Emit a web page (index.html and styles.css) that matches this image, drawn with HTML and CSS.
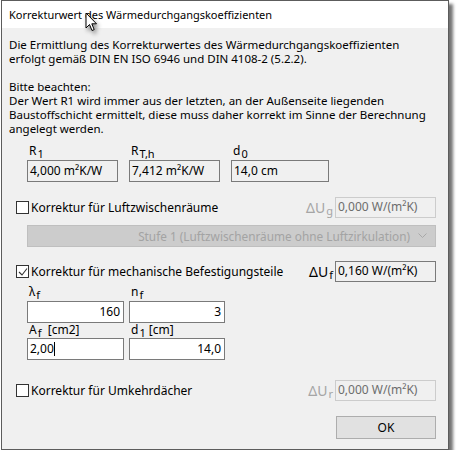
FILE: index.html
```html
<!DOCTYPE html>
<html lang="de">
<head>
<meta charset="utf-8">
<title>Korrekturwert</title>
<link rel="stylesheet" href="styles.css">
</head>
<body>
<div class="dialog">
  <div class="titlebar"><span>Korrekturwert des Wärmedurchgangskoeffizienten</span></div>
  <div class="client">
    <p class="info">Die Ermittlung des Korrekturwertes des Wärmedurchgangskoeffizienten<br>erfolgt gemäß DIN EN ISO 6946 und DIN 4108-2 (5.2.2).</p>
    <p class="info info-gap">Bitte beachten:<br>Der Wert R1 wird immer aus der letzten, an der Außenseite liegenden<br>Baustoffschicht ermittelt, diese muss daher korrekt im Sinne der Berechnung<br>angelegt werden.</p>

    <div class="fields fields-top">
      <div class="field w90">
        <div class="flabel">R<sub>1</sub></div>
        <div class="box readonly">4,000 m²K/W</div>
      </div>
      <div class="field w90 gap12">
        <div class="flabel">R<sub>T,h</sub></div>
        <div class="box readonly">7,412 m²K/W</div>
      </div>
      <div class="field w98 gap10">
        <div class="flabel">d<sub>0</sub></div>
        <div class="box readonly">14,0 cm</div>
      </div>
    </div>

    <div class="check-row row-air">
      <span class="cb"></span>
      <span class="cb-label">Korrektur für Luftzwischenräume</span>
      <span class="du disabled">ΔU<sub>g</sub></span>
      <div class="box ubox disabled-box">0,000 W/(m²K)</div>
    </div>

    <div class="combo">
      <span class="combo-text">Stufe 1 (Luftzwischenräume ohne Luftzirkulation)</span>
      <svg class="chev" width="9" height="6" viewBox="0 0 9 6"><path d="M0.5 0.5 L4.5 4.5 L8.5 0.5" fill="none" stroke="#a8a8a8" stroke-width="1"/></svg>
    </div>

    <div class="check-row row-mech">
      <span class="cb checked"><svg width="10" height="10" viewBox="0 0 10 10"><path d="M1 5 L4 8 L9 1.5" fill="none" stroke="#333" stroke-width="1.1"/></svg></span>
      <span class="cb-label">Korrektur für mechanische Befestigungsteile</span>
      <span class="du">ΔU<sub>f</sub></span>
      <div class="box ubox readonly">0,160 W/(m²K)</div>
    </div>

    <div class="fields grid2">
      <div class="field w97">
        <div class="flabel small">λ<sub>f</sub></div>
        <div class="box edit right">160</div>
      </div>
      <div class="field w96 gap5">
        <div class="flabel small">n<sub>f</sub></div>
        <div class="box edit right">3</div>
      </div>
    </div>
    <div class="fields grid2b">
      <div class="field w97">
        <div class="flabel small">A<sub>f</sub>&nbsp; [cm2]</div>
        <div class="box edit">2,00<span class="caret"></span></div>
      </div>
      <div class="field w96 gap5">
        <div class="flabel small">d<sub>1</sub> [cm]</div>
        <div class="box edit right">14,0</div>
      </div>
    </div>

    <div class="check-row row-roof">
      <span class="cb"></span>
      <span class="cb-label">Korrektur für Umkehrdächer</span>
      <span class="du disabled">ΔU<sub>r</sub></span>
      <div class="box ubox disabled-box">0,000 W/(m²K)</div>
    </div>

    <div class="buttons">
      <button class="btn">OK</button>
    </div>
  </div>
  <svg class="cursor" width="16" height="22" viewBox="0 0 16 22">
    <path d="M1 1 L1 16 L4.5 12.5 L7 18.5 L9.2 17.6 L6.8 11.8 L11.5 11.8 Z" fill="#fff" stroke="#000" stroke-width="1" stroke-linejoin="miter"/>
  </svg>
</div>
</body>
</html>
```

FILE: styles.css
```css
* { box-sizing: border-box; }
html, body {
  margin: 0;
  padding: 0;
  background: #ffffff;
}
body {
  font-family: "Noto Sans", "Liberation Sans", sans-serif;
  font-size: 11px;
  color: #000;
}
.dialog {
  position: relative;
  margin: 0 0 0 1px;
  width: 448px;
  height: 450px;
  border: 1px solid #5c5c5c;
  background: #f0f0f0;
  box-shadow: 4px 4px 3px rgba(0,0,0,0.55);
}
.titlebar {
  height: 27px;
  background: #ffffff;
  display: flex;
  align-items: center;
  padding-left: 7px;
  font-size: 11px;
}
.client {
  padding: 0 12px 0 0;
}
.info {
  margin: 10px 0 0 7px;
  line-height: 14px;
  font-size: 11.5px;
}
.info-gap { margin-top: 14px; }

.fields {
  display: flex;
  padding-left: 25px;
}
.fields-top { margin-top: 6px; }
.field { display: flex; flex-direction: column; }
.w90 { width: 91px; }
.w98 { width: 98px; }
.w97 { width: 97px; }
.w96 { width: 96px; }
.gap12 { margin-left: 11px; }
.gap10 { margin-left: 11px; }
.gap5 { margin-left: 5px; }

.flabel {
  height: 18px;
  padding-left: 2px;
  line-height: 18px;
  font-size: 12px;
}
.flabel sub {
  font-size: 11px;
  vertical-align: -3px;
  line-height: 0;
  margin-left: 1px;
}
.flabel.small { height: 17px; line-height: 16px; }
.grid2b .flabel { height: 15px; line-height: 14px; }

.box {
  height: 22px;
  border: 1px solid #7a7a7a;
  padding: 0 2px;
  line-height: 19px;
  font-size: 12px;
  white-space: nowrap;
  overflow: hidden;
}
.readonly { background: #f0f0f0; }
.edit { background: #ffffff; }
.right { text-align: right; padding-right: 3px; }
.caret {
  display: inline-block;
  width: 1px;
  height: 14px;
  background: #000;
  vertical-align: -3px;
}

.check-row {
  display: flex;
  align-items: center;
  padding-left: 14px;
}
.row-air { margin-top: 15px; }
.row-mech { margin-top: 14px; }
.row-roof { margin-top: 20px; }

.cb {
  width: 13px;
  height: 13px;
  border: 1px solid #333;
  background: #fff;
  display: inline-flex;
  align-items: center;
  justify-content: center;
  flex: none;
}
.cb-label {
  margin-left: 2px;
  font-size: 12px;
  flex: 1;
}
.du {
  font-size: 14px;
  margin-right: 2px;
  line-height: 20px;
}
.du sub {
  font-size: 11px;
  vertical-align: -2px;
  line-height: 0;
  margin-left: 1px;
}
.du.disabled { color: #a5a5a5; }
.ubox {
  width: 101px;
  height: 21px;
  line-height: 18px;
}
.disabled-box {
  border-color: #cccccc;
  background: #f0f0f0;
  color: #6d6d6d;
}

.combo {
  margin: 7px 0 0 25px;
  height: 22px;
  background: #cccccc;
  border: 1px solid #bfbfbf;
  display: flex;
  align-items: center;
  justify-content: flex-end;
  padding-right: 8px;
  color: #a3a3a3;
  font-size: 11.8px;
}
.combo-text { margin-right: 8px; }
.chev { display: block; }

.grid2 { margin-top: 2px; }
.grid2 .box { height: 22px; }
.grid2b { margin-top: 0; }

.buttons {
  display: flex;
  justify-content: flex-end;
  margin-top: 15px;
}
.btn {
  width: 100px;
  height: 23px;
  background: #e1e1e1;
  border: 1px solid #adadad;
  font-family: inherit;
  font-size: 12px;
  color: #000;
  padding: 0;
}

.cursor {
  position: absolute;
  left: 83px;
  top: 11px;
  filter: drop-shadow(2px 3px 2px rgba(0,0,0,0.45));
}
```
